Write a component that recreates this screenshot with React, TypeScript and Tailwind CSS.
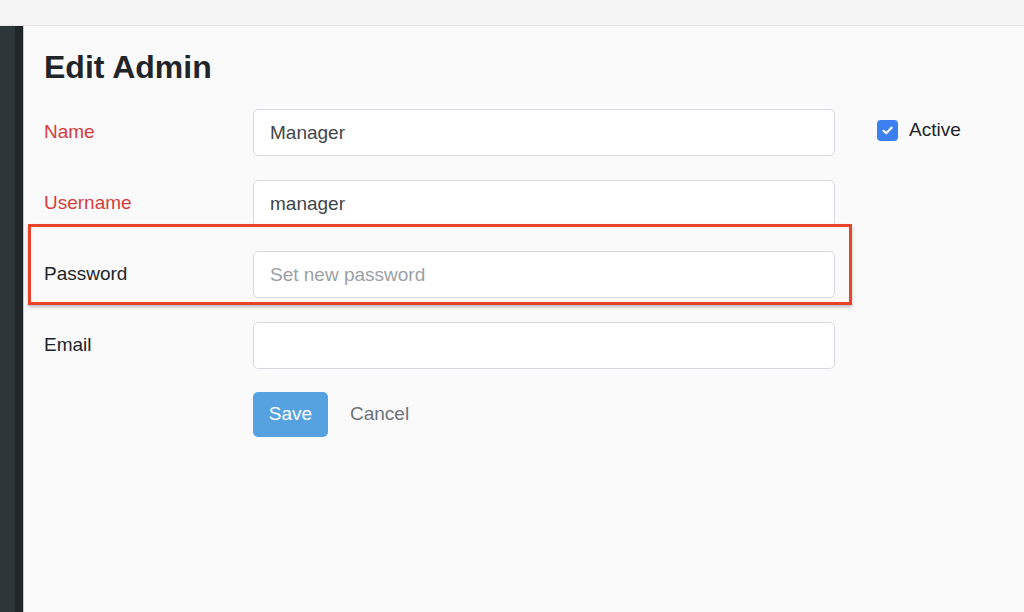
import React, { useState } from 'react';

interface Field {
  label: string;
  value: string;
  placeholder?: string;
  required?: boolean;
  highlight?: boolean;
}

const fields: Field[] = [
  { label: 'Name', value: 'Manager', required: true },
  { label: 'Username', value: 'manager', required: true },
  { label: 'Password', value: '', placeholder: 'Set new password', highlight: true },
  { label: 'Email', value: '' },
];

const App: React.FC = () => {
  const [active, setActive] = useState(true);

  return (
    <div className="flex h-[612px] w-[1024px] flex-col overflow-hidden bg-[#fafafa] font-['Liberation_Sans',Arial,sans-serif]">
      <div className="h-[26px] shrink-0 border-b border-[#e6e6e6] bg-[#f5f5f5]" />

      <div className="flex flex-1">
        {/* sidebar edge */}
        <div className="flex w-[24px] shrink-0">
          <div className="w-[15px] bg-[#2d3639]" />
          <div className="w-[8px] bg-[#212729]" />
          <div className="w-px bg-[#c8c8c8]" />
        </div>

        <div className="flex-1 pl-[20px] pt-[23px]">
          <h1 className="text-[32px] font-bold leading-[36px] text-[#212529]">Edit Admin</h1>

          <div className="mt-[24px] flex">
            <div className="flex w-[791px] flex-col gap-[24px]">
              {fields.map((f) => (
                <div key={f.label} className="relative flex items-center">
                  {f.highlight && (
                    <div className="pointer-events-none absolute -top-[27px] -bottom-[7px] -left-[16px] -right-[17px] border-[3px] border-[#e8432b] shadow-[0_2px_3px_rgba(0,0,0,0.25)]" />
                  )}
                  <label
                    className={`w-[209px] shrink-0 text-[19px] ${f.required ? 'text-[#d63c3c]' : 'text-[#212529]'}`}
                  >
                    {f.label}
                  </label>
                  <input
                    defaultValue={f.value}
                    placeholder={f.placeholder}
                    className="h-[47px] w-[582px] rounded-[5px] border border-[#d6dadf] bg-white px-[16px] text-[19px] text-[#3f4549] outline-none placeholder:text-[#9a9fa4]"
                  />
                </div>
              ))}

              <div className="-mt-px flex items-center gap-[22px] pl-[209px]">
                <button className="h-[45px] w-[75px] rounded-[5px] bg-[#56a2e0] text-[19px] text-white">
                  Save
                </button>
                <button className="text-[19px] text-[#6c737a]">Cancel</button>
              </div>
            </div>

            <label className="ml-[42px] flex h-[42px] cursor-pointer items-center gap-[11px] self-start">
              <span
                onClick={() => setActive(!active)}
                className="flex h-[21px] w-[21px] items-center justify-center rounded-[4px] bg-[#3b7ff1]"
              >
                {active && (
                  <svg width="11" height="9" viewBox="0 0 11 9" fill="none">
                    <path d="M1.5 4.8 L4.2 7.3 L9.5 1.7" stroke="white" strokeWidth="2.2" strokeLinecap="round" strokeLinejoin="round" />
                  </svg>
                )}
              </span>
              <span className="text-[19px] text-[#212529]">Active</span>
            </label>
          </div>
        </div>
      </div>
    </div>
  );
};

export default App;
